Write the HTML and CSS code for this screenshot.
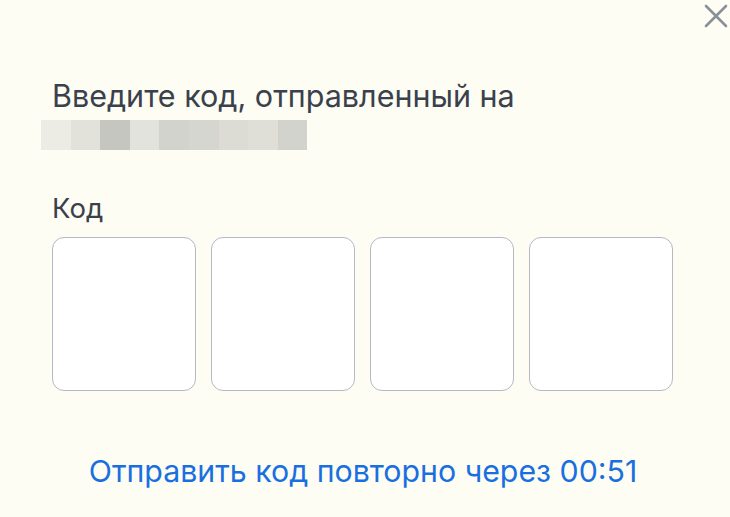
FILE: index.html
```html
<!DOCTYPE html>
<html lang="ru">
<head>
<meta charset="utf-8">
<link rel="stylesheet" href="styles.css">
</head>
<body>
<div class="dialog">
  <button class="close" aria-label="Закрыть">
    <svg width="26" height="26" viewBox="0 0 26 26"><path d="M3 3 L23 23 M23 3 L3 23" stroke="#8a9099" stroke-width="2.6" stroke-linecap="round"/></svg>
  </button>
  <p class="title">Введите код, отправленный на</p>
  <div class="masked">
    <span style="background:#ececE4"></span>
    <span style="background:#e2e2db"></span>
    <span style="background:#c6c6c1"></span>
    <span style="background:#e3e3dd"></span>
    <span style="background:#d3d3ce"></span>
    <span style="background:#d6d6d0"></span>
    <span style="background:#dcdcd5"></span>
    <span style="background:#dfdfd8"></span>
    <span style="background:#d3d3ce"></span>
  </div>
  <label class="label">Код</label>
  <div class="codes">
    <div class="cell"></div>
    <div class="cell"></div>
    <div class="cell"></div>
    <div class="cell"></div>
  </div>
  <a class="resend">Отправить код повторно через 00:51</a>
</div>
</body>
</html>
```
FILE: styles.css
```css
html, body {
  margin: 0;
  padding: 0;
  background: #fdfdf3;
}
body {
  font-family: Inter, "Noto Sans", sans-serif;
  color: #3b414c;
  width: 730px;
  height: 517px;
  overflow: hidden;
}
.dialog {
  position: relative;
  padding: 78px 0 0 52px;
  width: 622px;
}
.close {
  position: absolute;
  top: 3px;
  right: -55px;
  border: 0;
  background: none;
  padding: 0;
  width: 26px;
  height: 26px;
}
.title {
  margin: 0;
  font-size: 30.5px;
  line-height: 36px;
}
.masked {
  display: flex;
  margin: 6px 0 0 -11px;
  height: 30px;
}
.masked span {
  width: 29.6px;
  height: 30px;
}
.label {
  display: block;
  margin-top: 42px;
  font-size: 27.5px;
  line-height: 32px;
}
.codes {
  display: flex;
  gap: 15px;
  margin-top: 13px;
}
.cell {
  box-sizing: border-box;
  width: 144px;
  height: 154px;
  background: #fff;
  border: 1.5px solid #b4b9c4;
  border-radius: 12px;
}
.resend {
  display: block;
  text-align: center;
  margin-top: 64px;
  font-size: 30.3px;
  line-height: 32px;
  color: #1a6fe0;
}
```
